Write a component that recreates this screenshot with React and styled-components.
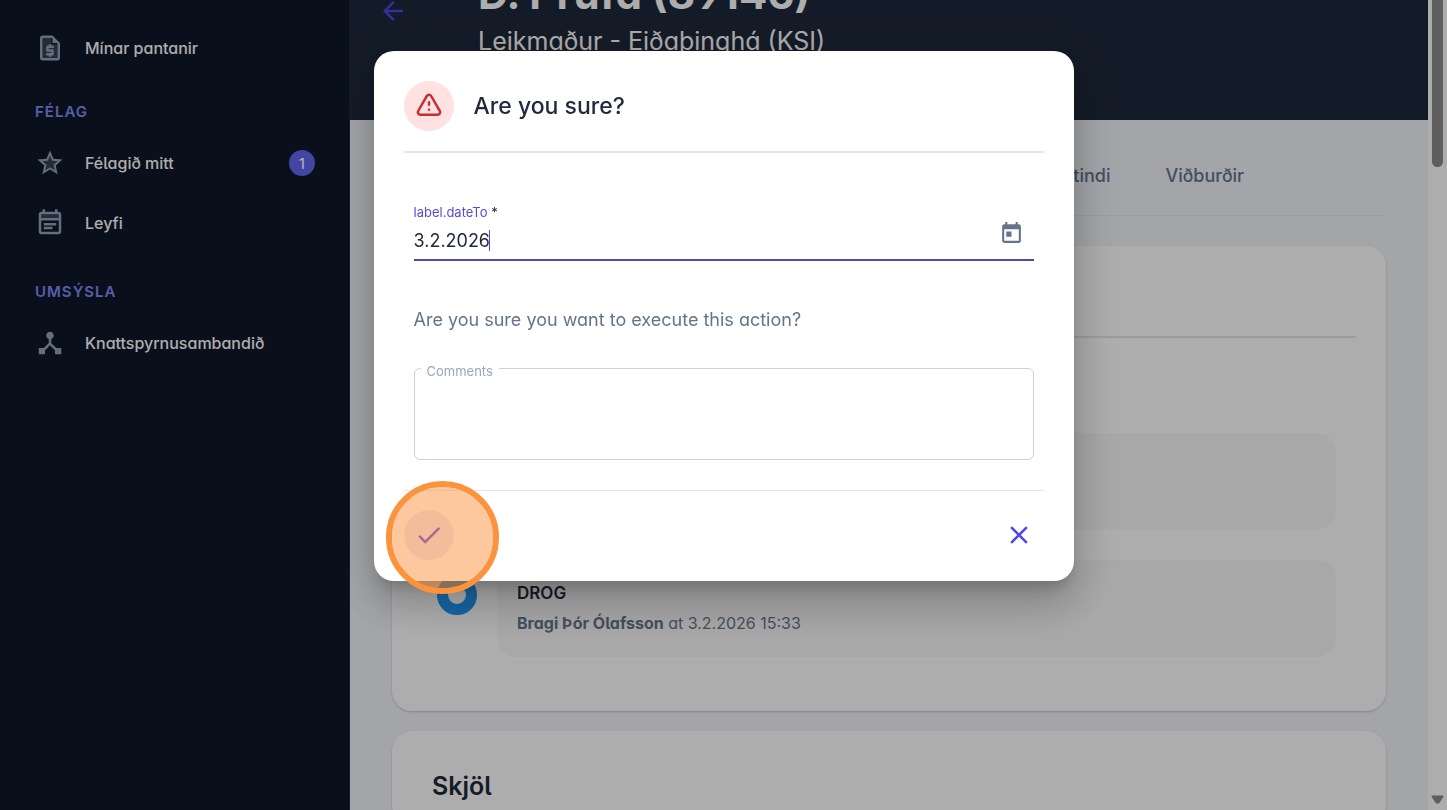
import styled, { createGlobalStyle } from 'styled-components';
import { HiOutlineExclamation } from 'react-icons/hi';
import { MdArrowBack, MdCheck, MdClose, MdToday } from 'react-icons/md';

const GlobalStyle = createGlobalStyle`
  * {
    box-sizing: border-box;
  }

  body {
    margin: 0;
    font-family: Inter, 'Noto Sans', sans-serif;
    font-size: 16px;
    color: #1e293b;
    background: #fff;
  }

  button,
  input,
  textarea {
    font: inherit;
  }
`;

const Shell = styled.div`
  display: flex;
  height: 100vh;
  overflow: hidden;
  font-feature-settings: 'cv05', 'cv11';
`;

const Sidebar = styled.nav`
  flex: 0 0 350px;
  padding-top: 18px;
  background: #0f172a;
  border-right: 1px solid #1e293b;
`;

const NavGroup = styled.div`
  padding-bottom: 5px;
`;

const NavItem = styled.a`
  display: flex;
  align-items: center;
  height: 60px;
  padding: 0 34px 0 35px;
  color: #fff;
  font-weight: 500;
  text-decoration: none;

  svg {
    width: 30px;
    height: 30px;
    margin-right: 20px;
    color: #94a3b8;
  }
`;

const NavHeading = styled.h2`
  display: flex;
  align-items: center;
  height: 24px;
  margin: 21px 0 10px 35px;
  color: #818cf8;
  font-size: 15px;
  font-weight: 600;
  letter-spacing: 1px;
`;

const Badge = styled.span`
  display: grid;
  place-items: center;
  width: 26px;
  height: 26px;
  margin-left: auto;
  border-radius: 50%;
  background: #6366f1;
  font-size: 14px;
`;

const Main = styled.main`
  flex: 1;
  min-width: 0;
  display: flex;
  flex-direction: column;
  background: #f1f4f9;
`;

const Header = styled.header`
  flex: 0 0 120px;
  display: flex;
  align-items: flex-end;
  padding: 0 28px 61px;
  overflow: hidden;
  background: #1e293b;
`;

const BackLink = styled.a`
  width: 100px;
  height: 63px;
  color: #4f46e5;
`;

const PlayerName = styled.h1`
  margin: 0 0 5px;
  color: #fff;
  font-size: 42px;
  font-weight: 700;
  line-height: 48px;
  font-feature-settings: 'cv04', 'cv05', 'cv11';
`;

const PlayerClub = styled.p`
  margin: 0;
  color: #fff;
  font-size: 25px;
  line-height: 36px;
`;

const Tabs = styled.div`
  flex: 0 0 96px;
  display: flex;
  align-items: center;
  justify-content: flex-end;
  gap: 55px;
  margin: 0 42px 30px;
  padding: 16px 142px 0 0;
  border-bottom: 1px solid #e2e5ea;
`;

const Tab = styled.a`
  color: #64748b;
  font-size: 18px;
  font-weight: 500;
  text-decoration: none;
`;

const Card = styled.section`
  flex: none;
  margin: 0 42px 20px;
  padding: 40px 40px 24px;
  border-radius: 20px;
  background: #fff;
  box-shadow: 0 1px 3px rgba(0, 0, 0, 0.1), 0 1px 2px rgba(0, 0, 0, 0.1);
`;

const CardTitle = styled.h2`
  margin: 0;
  font-size: 25px;
  font-weight: 600;
  line-height: 30px;
`;

const CardHeader = styled.div`
  height: 52px;
  margin: 0 -10px 95px;
  border-bottom: 2px solid #e2e5ea;
`;

const TimelineRow = styled.div`
  display: flex;
  align-items: flex-start;
  margin: 0 10px 30px 0;
`;

const TimelineDot = styled.div`
  flex: none;
  width: 40px;
  height: 40px;
  margin: 15px 20px 0 5px;
  border: 11px solid #2196f3;
  border-radius: 50%;
`;

const TimelineCard = styled.div`
  flex: 1;
  height: 97px;
  padding: 21px 20px;
  border-radius: 20px;
  background: #f8f8f8;
  color: #64748b;
  line-height: 24px;
`;

const TimelineTitle = styled.h3`
  margin: 0 0 6px;
  color: #1e293b;
  font-size: 17px;
  font-weight: 600;
  line-height: 24px;
`;

const ScrollTrack = styled.div`
  flex: 0 0 19px;
  display: flex;
  flex-direction: column;
  align-items: center;
  justify-content: space-between;
  padding-bottom: 5px;
  background: #fff;
  color: #8b8b8b;
`;

const ScrollThumb = styled.div`
  width: 11px;
  height: 167px;
  border-radius: 0 0 6px 6px;
  background: #8b8b8b;
`;

const Backdrop = styled.div`
  position: fixed;
  inset: 0;
  display: flex;
  align-items: flex-start;
  justify-content: center;
  padding: 51px 20px;
  background: rgba(0, 0, 0, 0.32);
`;

const Dialog = styled.form`
  position: relative;
  width: 100%;
  max-width: 700px;
  padding: 30px 30px 21px;
  border-radius: 20px;
  background: #fff;
  box-shadow: 0 11px 15px -7px rgba(0, 0, 0, 0.2), 0 24px 38px 3px rgba(0, 0, 0, 0.14),
    0 9px 46px 8px rgba(0, 0, 0, 0.12);
`;

const DialogHeader = styled.div`
  display: flex;
  align-items: center;
  gap: 20px;
  padding-bottom: 20px;
  border-bottom: 2px solid #e2e5ea;
`;

const WarningCircle = styled.div`
  display: grid;
  place-items: center;
  width: 50px;
  height: 50px;
  border-radius: 50%;
  background: #fee2e2;
  color: #c82f2f;
`;

const DialogTitle = styled.h2`
  margin: 0;
  font-size: 23px;
  font-weight: 500;
  line-height: 30px;
`;

const DialogBody = styled.div`
  padding: 51px 10px 30px;
`;

const DateField = styled.div`
  display: flex;
  align-items: center;
  justify-content: space-between;
  height: 57px;
  padding-right: 10px;
  border-bottom: 2px solid #5248a5;
`;

const DateText = styled.div`
  flex: 1;
`;

const DateLabel = styled.label`
  display: block;
  color: #5b4bd0;
  font-size: 13px;
  line-height: 17px;

  span {
    color: #1e293b;
  }
`;

const DateValue = styled.div`
  display: flex;
  align-items: center;
  height: 38px;
`;

const DateInput = styled.input`
  field-sizing: content;
  height: 30px;
  padding: 0;
  border: 0;
  outline: 0;
  background: none;
  color: #1e293b;
  font-size: 18px;
  caret-color: transparent;
`;

const Caret = styled.span`
  width: 1px;
  height: 21px;
  margin-left: -1px;
  background: #4f46e5;
`;

const PlainButton = styled.button`
  display: grid;
  place-items: center;
  padding: 0;
  border: 0;
  background: none;
  color: #64748b;
  cursor: pointer;
`;

const CalendarButton = styled(PlainButton)`
  padding-top: 4px;
`;

const Question = styled.p`
  margin: 46px 0 25px;
  color: #64748b;
  font-size: 18px;
  line-height: 26px;
  font-feature-settings: 'cv05', 'cv11';
`;

const CommentBox = styled.fieldset`
  height: 102px;
  margin: 0;
  padding: 0 6px;
  border: 1px solid #cdd2da;
  border-radius: 6px;
`;

const CommentLegend = styled.legend`
  padding: 6px 6px 0;
  color: #9aa7b8;
  font-size: 13px;
  line-height: 14px;
`;

const CommentInput = styled.textarea`
  display: block;
  width: 100%;
  height: 76px;
  border: 0;
  outline: 0;
  resize: none;
  background: none;
`;

const DialogFooter = styled.div`
  display: flex;
  justify-content: space-between;
  padding-top: 19px;
  border-top: 1px solid #e2e5ea;
`;

const RoundButton = styled(PlainButton)`
  width: 50px;
  height: 50px;
  border-radius: 50%;
  background: ${({ $filled }) => ($filled ? 'rgba(79, 70, 229, 0.12)' : 'none')};
  color: #4f46e5;
`;

const ClickMarker = styled.div`
  position: absolute;
  left: 12px;
  bottom: -13px;
  width: 113px;
  height: 113px;
  border: 6px solid #fb923c;
  border-radius: 50%;
  background: rgba(251, 146, 60, 0.5);
  background-clip: padding-box;
  pointer-events: none;
`;

// Two-tone nav icons: tinted fill below, solid outline on top
const OrdersIcon = () => (
  <svg viewBox="0 0 24 24" fill="currentColor">
    <path opacity=".3" d="M13 4H6v16h12V9h-5z" />
    <path d="M14 2H6c-1.100 0-2 .9-2 2v16c0 1.100.9 2 2 2h12c1.100 0 2-.9 2-2V8zM6 20V4h8v4h4v12z" />
    <path d="M11 19h2v-1h1c.55 0 1-.45 1-1v-3c0-.55-.45-1-1-1h-3v-1h4v-2h-2V9h-2v1h-1c-.55 0-1 .45-1 1v3c0 .55.45 1 1 1h3v1H9v2h2z" />
  </svg>
);

const StarIcon = () => (
  <svg viewBox="0 0 24 24" fill="currentColor">
    <path opacity=".3" d="M12 15.400l-3.760 2.270 1-4.280-3.320-2.880 4.380-.38L12 6.100l1.710 4.040 4.380.38-3.320 2.880 1 4.280z" />
    <path d="M22 9.240l-7.190-.62L12 2 9.190 8.630 2 9.240l5.460 4.730L5.820 21 12 17.270 18.180 21l-1.630-7.030L22 9.240zM12 15.400l-3.760 2.270 1-4.280-3.320-2.880 4.380-.38L12 6.100l1.710 4.040 4.380.38-3.320 2.880 1 4.280L12 15.400z" />
  </svg>
);

const LicenceIcon = () => (
  <svg viewBox="0 0 24 24" fill="currentColor">
    <path opacity=".3" d="M5 5h14v3H5z" />
    <path d="M19 3h-1V1h-2v2H8V1H6v2H5c-1.110 0-2 .9-2 2v14c0 1.100.89 2 2 2h14c1.100 0 2-.9 2-2V5c0-1.100-.9-2-2-2zm0 16H5V10h14v9zm0-11H5V5h14v3zM7 12h10v2H7zm0 3h7v2H7z" />
  </svg>
);

const FederationIcon = () => (
  <svg viewBox="0 0 24 24" fill="currentColor">
    <path d="M17 16l-4-4V8.820C14.160 8.400 15 7.300 15 6c0-1.660-1.340-3-3-3S9 4.340 9 6c0 1.300.84 2.400 2 2.820V12l-4 4H3v5h5v-3.050l4-4.200 4 4.200V21h5v-5h-4z" />
  </svg>
);

const ScrollArrow = () => (
  <svg width="13" height="10" viewBox="0 0 13 10" fill="currentColor" stroke="currentColor" strokeWidth="2" strokeLinejoin="round">
    <path d="M1.500 1.500h10l-4 6h-2z" />
  </svg>
);

export default function App() {
  return (
    <>
      <GlobalStyle />
      <Shell>
        <Sidebar>
          <NavItem href="#orders"><OrdersIcon />Mínar pantanir</NavItem>
          <NavGroup>
            <NavHeading>FÉLAG</NavHeading>
            <NavItem href="#club"><StarIcon />Félagið mitt<Badge>1</Badge></NavItem>
            <NavItem href="#licences"><LicenceIcon />Leyfi</NavItem>
          </NavGroup>
          <NavGroup>
            <NavHeading>UMSÝSLA</NavHeading>
            <NavItem href="#federation"><FederationIcon />Knattspyrnusambandið</NavItem>
          </NavGroup>
        </Sidebar>

        <Main>
          <Header>
            <BackLink href="#back" aria-label="Back"><MdArrowBack size={30} /></BackLink>
            <div>
              <PlayerName>D. Prufa (89146)</PlayerName>
              <PlayerClub>Leikmaður - Eiðaþinghá (KSI)</PlayerClub>
            </div>
          </Header>

          <Tabs>
            <Tab href="#rights">Réttindi</Tab>
            <Tab href="#events">Viðburðir</Tab>
          </Tabs>

          <Card>
            <CardHeader />
            <TimelineRow>
              <TimelineDot />
              <TimelineCard />
            </TimelineRow>
            <TimelineRow>
              <TimelineDot />
              <TimelineCard>
                <TimelineTitle>DROG</TimelineTitle>
                <strong>Bragi Þór Ólafsson</strong> at 3.2.2026 15:33
              </TimelineCard>
            </TimelineRow>
          </Card>

          <Card>
            <CardTitle>Skjöl</CardTitle>
          </Card>
        </Main>

        <ScrollTrack>
          <ScrollThumb />
          <ScrollArrow />
        </ScrollTrack>
      </Shell>

      <Backdrop>
        <Dialog role="dialog" aria-labelledby="dialog-title" onSubmit={(e) => e.preventDefault()}>
          <DialogHeader>
            <WarningCircle><HiOutlineExclamation size={30} /></WarningCircle>
            <DialogTitle id="dialog-title">Are you sure?</DialogTitle>
          </DialogHeader>

          <DialogBody>
            <DateField>
              <DateText>
                <DateLabel htmlFor="date-to">label.dateTo <span>*</span></DateLabel>
                <DateValue>
                  <DateInput id="date-to" defaultValue="3.2.2026" autoFocus />
                  <Caret />
                </DateValue>
              </DateText>
              <CalendarButton type="button" aria-label="Open calendar"><MdToday size={25} /></CalendarButton>
            </DateField>

            <Question>Are you sure you want to execute this action?</Question>

            <CommentBox>
              <CommentLegend><label htmlFor="comments">Comments</label></CommentLegend>
              <CommentInput id="comments" />
            </CommentBox>
          </DialogBody>

          <DialogFooter>
            <RoundButton $filled type="submit" aria-label="Confirm"><MdCheck size={30} /></RoundButton>
            <RoundButton type="button" aria-label="Cancel"><MdClose size={30} /></RoundButton>
          </DialogFooter>

          <ClickMarker />
        </Dialog>
      </Backdrop>
    </>
  );
}
